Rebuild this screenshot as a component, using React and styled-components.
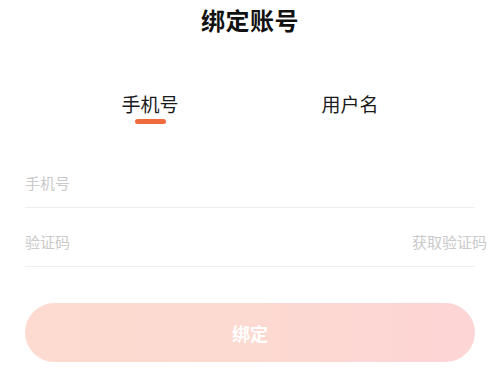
import React, { useState } from 'react';
import styled, { createGlobalStyle } from 'styled-components';

const GlobalStyle = createGlobalStyle`
  body {
    margin: 0;
    background: #ffffff;
    font-family: "Noto Sans CJK SC", "Noto Sans", sans-serif;
  }
`;

const Page = styled.div`
  width: 500px;
  height: 386px;
  background: #ffffff;
  overflow: hidden;
`;

const Title = styled.h1`
  margin: 0;
  height: 40px;
  line-height: 39px;
  text-align: center;
  font-size: 24px;
  font-weight: 700;
  color: #111111;
  letter-spacing: 0.5px;
`;

const Tabs = styled.div`
  display: flex;
  padding: 0 50px;
  margin-top: 49px;
`;

const Tab = styled.div`
  flex: 1;
  display: flex;
  flex-direction: column;
  align-items: center;
  cursor: pointer;
`;

const TabLabel = styled.span`
  font-size: 19px;
  line-height: 30px;
  color: #1a1a1a;
`;

const TabBar = styled.span`
  width: 31px;
  height: 5px;
  border-radius: 3px;
  background: ${({ $active }) => ($active ? '#ef6b3e' : 'transparent')};
`;

const Form = styled.div`
  padding: 0 25px;
  margin-top: 25px;
`;

const Field = styled.div`
  display: flex;
  align-items: center;
  height: 59px;
  padding-top: 9px;
  box-sizing: border-box;
  border-bottom: 1.5px solid #efefef;
`;

const Input = styled.input`
  flex: 1;
  min-width: 0;
  border: none;
  outline: none;
  padding: 0;
  font-family: inherit;
  font-size: 15px;
  color: #333333;
  background: transparent;
  &::placeholder {
    color: #cacaca;
  }
`;

const CodeLink = styled.span`
  font-size: 15px;
  color: #cacaca;
  margin-right: -12px;
  white-space: nowrap;
  cursor: pointer;
`;

const SubmitButton = styled.button`
  display: block;
  width: 450px;
  height: 59px;
  margin: 36px auto 0;
  border: none;
  border-radius: 30px;
  background: linear-gradient(90deg, #fddbd0 0%, #fcd9d1 50%, #fdd5d5 100%);
  color: #ffffff;
  font-family: inherit;
  font-size: 18px;
  font-weight: 700;
  cursor: pointer;
`;

export default function App() {
  const [tab, setTab] = useState('phone');

  return (
    <Page>
      <GlobalStyle />
      <Title>绑定账号</Title>
      <Tabs>
        <Tab onClick={() => setTab('phone')}>
          <TabLabel>手机号</TabLabel>
          <TabBar $active={tab === 'phone'} />
        </Tab>
        <Tab onClick={() => setTab('user')}>
          <TabLabel>用户名</TabLabel>
          <TabBar $active={tab === 'user'} />
        </Tab>
      </Tabs>
      <Form>
        <Field>
          <Input placeholder="手机号" />
        </Field>
        <Field>
          <Input placeholder="验证码" />
          <CodeLink>获取验证码</CodeLink>
        </Field>
      </Form>
      <SubmitButton>绑定</SubmitButton>
    </Page>
  );
}
